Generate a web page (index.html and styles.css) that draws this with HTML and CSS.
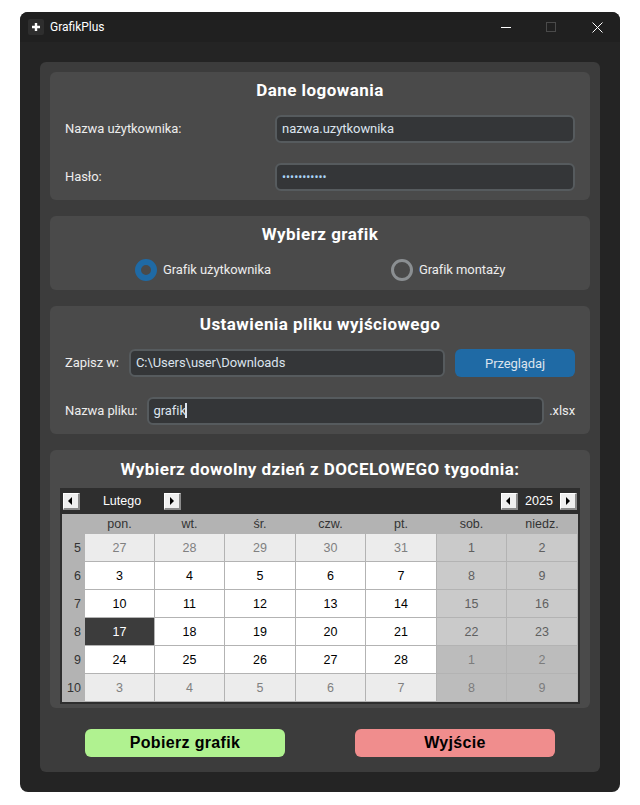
FILE: index.html
```html
<!DOCTYPE html>
<html lang="pl">
<head>
    <meta charset="UTF-8">
    <meta name="viewport" content="width=device-width, initial-scale=1.0">
    <title>GrafikPlus</title>
    <link rel="stylesheet" href="styles.css">
</head>
<body>
    <div class="window">
        <header class="titlebar">
            <div class="app-icon">
                <svg width="16" height="16" viewBox="0 0 16 16"><path d="M8 4v8M4 8h8" stroke="#fff" stroke-width="2.4" fill="none"/></svg>
            </div>
            <span class="app-name">GrafikPlus</span>
            <div class="window-buttons">
                <svg class="win-min" width="10" height="10" viewBox="0 0 10 10"><path d="M0 5.5h10" stroke="#fff" fill="none"/></svg>
                <svg class="win-max" width="10" height="10" viewBox="0 0 10 10"><rect x="0.5" y="0.5" width="9" height="9" stroke="#4a4a4a" fill="none"/></svg>
                <svg class="win-close" width="11" height="11" viewBox="0 0 11 11"><path d="M0.5 0.5l10 10M10.5 0.5l-10 10" stroke="#fff" stroke-width="1" fill="none"/></svg>
            </div>
        </header>

        <main class="main">
            <section class="card login">
                <h2>Dane logowania</h2>
                <div class="row">
                    <span class="label">Nazwa użytkownika:</span>
                    <div class="field field-login">nazwa.uzytkownika</div>
                </div>
                <div class="row">
                    <span class="label">Hasło:</span>
                    <div class="field field-login password">•••••••••••</div>
                </div>
            </section>

            <section class="card choose">
                <h2>Wybierz grafik</h2>
                <div class="radios">
                    <div class="radio-item"><span class="radio checked"></span><span class="label">Grafik użytkownika</span></div>
                    <div class="radio-item"><span class="radio"></span><span class="label">Grafik montaży</span></div>
                </div>
            </section>

            <section class="card output">
                <h2>Ustawienia pliku wyjściowego</h2>
                <div class="row">
                    <span class="label">Zapisz w:</span>
                    <div class="field grow">C:\Users\user\Downloads</div>
                    <button class="browse">Przeglądaj</button>
                </div>
                <div class="row">
                    <span class="label">Nazwa pliku:</span>
                    <div class="field grow name-field">grafik<span class="caret"></span></div>
                    <span class="label ext">.xlsx</span>
                </div>
            </section>

            <section class="card picker">
                <h2>Wybierz dowolny dzień z DOCELOWEGO tygodnia:</h2>
                <div class="calendar">
                    <div class="cal-head">
                        <button class="nav prev"></button>
                        <span class="cal-month">Lutego</span>
                        <button class="nav next"></button>
                        <span class="cal-spacer"></span>
                        <button class="nav prev"></button>
                        <span class="cal-year">2025</span>
                        <button class="nav next"></button>
                    </div>
                    <div class="cal-grid">
                        <div class="wd"></div><div class="wd">pon.</div><div class="wd">wt.</div><div class="wd">śr.</div><div class="wd">czw.</div><div class="wd">pt.</div><div class="wd">sob.</div><div class="wd">niedz.</div>

                        <div class="wk">5</div><div class="d other">27</div><div class="d other">28</div><div class="d other">29</div><div class="d other">30</div><div class="d other">31</div><div class="d we">1</div><div class="d we">2</div>
                        <div class="wk">6</div><div class="d">3</div><div class="d">4</div><div class="d">5</div><div class="d">6</div><div class="d">7</div><div class="d we">8</div><div class="d we">9</div>
                        <div class="wk">7</div><div class="d">10</div><div class="d">11</div><div class="d">12</div><div class="d">13</div><div class="d">14</div><div class="d we">15</div><div class="d we">16</div>
                        <div class="wk">8</div><div class="d selected">17</div><div class="d">18</div><div class="d">19</div><div class="d">20</div><div class="d">21</div><div class="d we">22</div><div class="d we">23</div>
                        <div class="wk">9</div><div class="d">24</div><div class="d">25</div><div class="d">26</div><div class="d">27</div><div class="d">28</div><div class="d we-other">1</div><div class="d we-other">2</div>
                        <div class="wk">10</div><div class="d other">3</div><div class="d other">4</div><div class="d other">5</div><div class="d other">6</div><div class="d other">7</div><div class="d we-other">8</div><div class="d we-other">9</div>
                    </div>
                </div>
            </section>

            <div class="actions">
                <button class="action download">Pobierz grafik</button>
                <button class="action quit">Wyjście</button>
            </div>
        </main>
    </div>
</body>
</html>
```

FILE: styles.css
```css
/* Global */
body {
    margin: 0;
    padding: 12px 20px 13px;
    background-color: #FFFFFF;
    font-family: 'Roboto', sans-serif;
    font-size: 13px;
    color: #E8E8E8;
}

button {
    border: none;
    padding: 0;
    font-family: inherit;
}

/* Window frame */
.window {
    width: 600px;
    height: 780px;
    background-color: #242424;
    border-radius: 8px;
    overflow: hidden;
}

.titlebar {
    display: flex;
    align-items: center;
    height: 30px;
    padding-left: 8px;
    background-color: #202020;
}

.app-icon {
    width: 16px;
    height: 16px;
    background-color: #2E2E2E;
    border-radius: 2px;
}

.app-name {
    margin-left: 6px;
    font-size: 12px;
    color: #FFFFFF;
}

.window-buttons {
    display: flex;
    align-items: center;
    gap: 35px;
    margin-left: auto;
    padding-right: 17px;
}

.window-buttons svg {
    display: block;
}

.win-close {
    margin-left: 1px;
}

/* Main panel */
.main {
    display: flex;
    flex-direction: column;
    gap: 16px;
    height: 710px;
    box-sizing: border-box;
    margin: 20px 20px 0;
    padding: 10px 10px 0;
    background-color: #3C3C3C;
    border-radius: 6px;
}

.card {
    background-color: #4A4A4A;
    border-radius: 6px;
    padding: 8px 15px 9px;
}

.card h2 {
    margin: 0;
    height: 20px;
    line-height: 20px;
    font-size: 17px;
    font-weight: bold;
    letter-spacing: 0.45px;
    text-align: center;
    color: #FFFFFF;
}

.row {
    display: flex;
    align-items: center;
    gap: 10px;
    margin-top: 20px;
}

.card h2 + .row {
    margin-top: 15px;
}

.login .row {
    justify-content: space-between;
}

.label {
    margin-bottom: 2px;
    white-space: nowrap;
    letter-spacing: -0.08px;
    color: #EDEDED;
}

.ext {
    margin-left: -5px;
}

.field {
    height: 28px;
    box-sizing: border-box;
    padding: 0 5px;
    line-height: 24px;
    letter-spacing: -0.05px;
    background-color: #343638;
    border: 2px solid #565B5E;
    border-radius: 6px;
    color: #DCE4EE;
}

.field-login {
    width: 300px;
}

.name-field {
    padding-left: 4px;
}

.password {
    color: #A9D3F5;
    font-size: 12px;
    letter-spacing: 0;
}

.grow {
    flex: 1;
}

.caret {
    display: inline-block;
    width: 2px;
    height: 15px;
    margin-left: -1px;
    vertical-align: -3px;
    background-color: #DCE4EE;
}

.browse {
    width: 120px;
    height: 28px;
    background-color: #1F6AA5;
    border-radius: 6px;
    font-size: 13px;
    letter-spacing: -0.1px;
    color: #DCE4EE;
}

/* Radio buttons */
.radios {
    display: grid;
    grid-template-columns: 256px auto;
    margin-top: 15px;
    padding-left: 70px;
    height: 22px;
}

.radio-item {
    display: flex;
    align-items: center;
    gap: 6px;
}

.radio {
    width: 22px;
    height: 22px;
    box-sizing: border-box;
    border: 3px solid #8B8F92;
    border-radius: 50%;
}

.radio.checked {
    border: 6px solid #1F6AA5;
}

/* Calendar */
.picker {
    padding: 9px 10px 4px;
    height: 258px;
    box-sizing: border-box;
}

.calendar {
    margin-top: 9px;
    padding: 0 2px 2px;
    background-color: #2E2E2E;
}

.cal-head {
    display: flex;
    align-items: center;
    height: 26px;
    padding: 0 1px;
    font-family: 'Liberation Sans', sans-serif;
    font-size: 12.5px;
    color: #FFFFFF;
}

.cal-month {
    width: 84px;
    text-align: center;
}

.cal-year {
    width: 42px;
    text-align: center;
}

.cal-spacer {
    flex: 1;
}

.nav {
    position: relative;
    width: 17px;
    height: 17px;
    background-color: #EFEFEF;
    border-top: 1px solid #FFFFFF;
    border-left: 1px solid #FFFFFF;
    border-right: 2px solid #8C8C8C;
    border-bottom: 2px solid #8C8C8C;
    box-sizing: border-box;
}

.nav::after {
    content: "";
    position: absolute;
    top: 3px;
    border-top: 4px solid transparent;
    border-bottom: 4px solid transparent;
}

.nav.prev::after {
    left: 4px;
    border-right: 4px solid #000000;
}

.nav.next::after {
    left: 5px;
    border-left: 4px solid #000000;
}

.cal-grid {
    display: grid;
    grid-template-columns: 22px 69px 69px 70px 69px 70px 69px 70px;
    grid-template-rows: 19px repeat(6, 27px);
    gap: 1px;
    padding-bottom: 1px;
    background-color: #B3B3B3;
    font-family: 'Liberation Sans', sans-serif;
    font-size: 12.5px;
}

.cal-grid > div {
    display: flex;
    align-items: center;
    justify-content: center;
}

.wd {
    color: #333333;
}

.cal-grid > .wk {
    justify-content: flex-end;
    padding-right: 3px;
    color: #333333;
}

.d {
    background-color: #FFFFFF;
    color: #000000;
}

.d.other {
    background-color: #ECECEC;
    color: #808080;
}

.d.we {
    background-color: #CACACA;
    color: #606060;
}

.d.we-other {
    background-color: #BCBCBC;
    color: #7C7C7C;
}

.d.selected {
    background-color: #3C3C3C;
    color: #FFFFFF;
}

/* Bottom buttons */
.actions {
    display: grid;
    grid-template-columns: 1fr 1fr;
    justify-items: center;
    margin-top: 5px;
}

.action {
    width: 200px;
    height: 28px;
    border-radius: 6px;
    font-family: 'Liberation Sans', sans-serif;
    font-size: 16px;
    font-weight: bold;
    letter-spacing: 0.35px;
    color: #000000;
}

.download {
    background-color: #B0F290;
}

.quit {
    background-color: #F08D8D;
}
```
